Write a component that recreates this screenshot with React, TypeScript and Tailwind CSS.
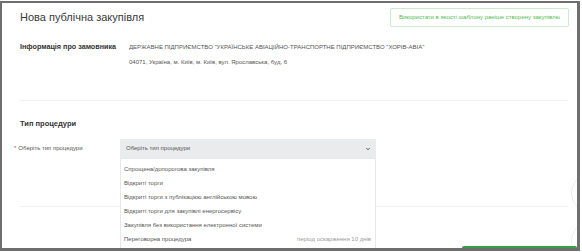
import { ChevronDown } from 'lucide-react'

const PROCEDURES = [
  { label: 'Спрощена/допорогова закупівля' },
  { label: 'Відкриті торги' },
  { label: 'Відкриті торги з публікацією англійською мовою' },
  { label: 'Відкриті торги для закупівлі енергосервісу' },
  { label: 'Закупівля без використання електронної системи' },
  { label: 'Переговорна процедура', note: 'період оскарження 10 днів' },
]

export default function App() {
  return (
    <div
      className="w-[582px] h-[252px] bg-white overflow-hidden"
      style={{ fontFamily: '"Liberation Sans", Arial, "Noto Sans", sans-serif' }}
    >
      <div className="relative mt-px w-[580px] h-[250px] border-l-2 border-t-2 border-r-[3px] border-b-[3px] border-[#6f6f6f] overflow-hidden">
        {/* Header */}
        <div className="flex items-start justify-between pl-[18px] pr-[8px] pt-[5px]">
          <h1 className="text-[11px] leading-[19px] text-[#3a3a3a] font-normal">Нова публічна закупівля</h1>
          <button className="h-[19px] w-[179px] rounded-[2px] border border-[#cfe8cf] text-[6px] text-[#5cb85c] bg-white">
            Використати в якості шаблону раніше створену закупівлю
          </button>
        </div>

        {/* Customer info */}
        <div className="flex pl-[18px] mt-[14px]">
          <div className="w-[109px] text-[7.2px] leading-[12px] font-bold text-[#333]">Інформація про замовника</div>
          <div className="text-[6px] leading-[12px] text-[#555]">
            <p>ДЕРЖАВНЕ ПІДПРИЄМСТВО "УКРАЇНСЬКЕ АВІАЦІЙНО-ТРАНСПОРТНЕ ПІДПРИЄМСТВО "ХОРІВ-АВІА"</p>
            <p className="mt-[3px]">04071, Україна, м. Київ, м. Київ, вул. Ярославська, буд. 6</p>
          </div>
        </div>

        <div className="ml-[18px] mr-[9px] mt-[32px] h-px bg-[#f0f0f0]" />

        {/* Procedure type */}
        <h2 className="pl-[18px] mt-[17px] text-[7.5px] leading-[12px] font-bold text-[#333]">Тип процедури</h2>

        <div className="flex items-center pl-[12px] mt-[9px]">
          <div className="w-[106px] text-[6px] text-[#555]">
            <span className="text-[#e53935] mr-[2px]">*</span>Оберіть тип процедури
          </div>
          <div className="relative w-[256px]">
            <div className="h-[19px] flex items-center justify-between pl-[6px] pr-[5px] bg-[#e9ebed] text-[6px] text-[#555]">
              Оберіть тип процедури
              <ChevronDown className="w-[6px] h-[6px] text-[#444]" strokeWidth={3.5} />
            </div>
            {/* Open dropdown */}
            <div className="absolute left-0 top-full z-10 w-full border border-[#e8e8e8] bg-white pt-[3px] pb-[4px]">
              {PROCEDURES.map((p) => (
                <div key={p.label} className="h-[14px] flex items-center justify-between pl-[3px] pr-[4px] text-[6px] text-[#555]">
                  <span>{p.label}</span>
                  {p.note && <span className="text-[#999]">{p.note}</span>}
                </div>
              ))}
            </div>
          </div>
        </div>

        <div className="ml-[18px] mr-[9px] mt-[48px] h-px bg-[#f0f0f0]" />

        {/* Floating round buttons at the edge */}
        <div className="absolute right-[-34px] top-[170px] w-[40px] h-[40px] rounded-full border border-[#ececec] bg-white" />
        <div className="absolute right-[-34px] top-[218px] w-[40px] h-[40px] rounded-full border border-[#ececec] bg-white" />

        {/* Bottom button edge */}
        <div className="absolute bottom-0 right-0 w-[115px] h-[2px] rounded-t-[2px] bg-[#3f9b45]" />
      </div>
    </div>
  )
}
